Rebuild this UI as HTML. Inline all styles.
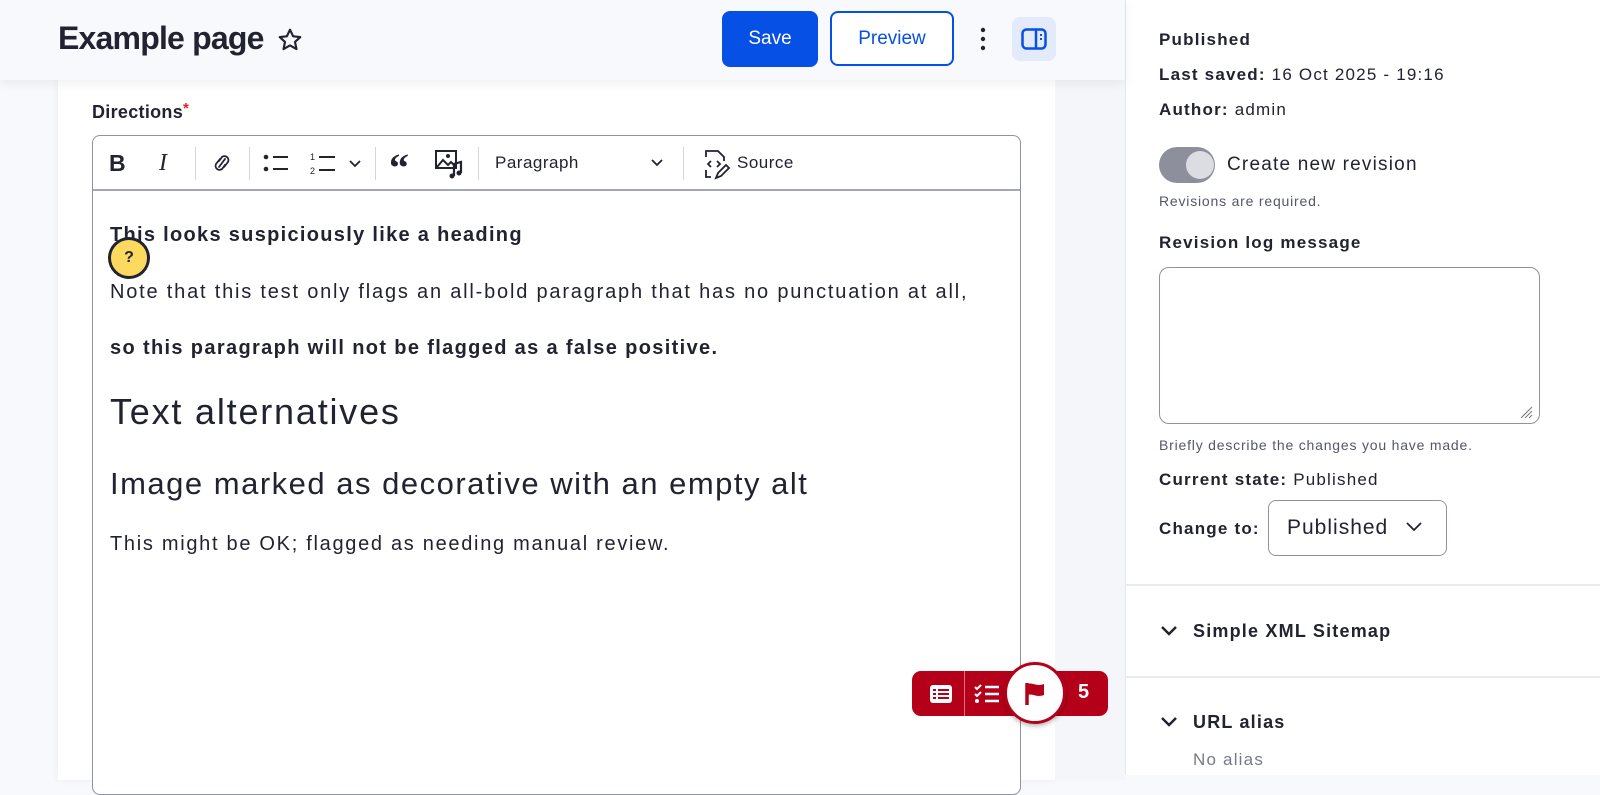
<!DOCTYPE html>
<html><head><meta charset="utf-8"><style>
*{box-sizing:border-box;margin:0;padding:0}
body{width:1600px;height:775px;overflow:hidden;background:#f8f9fc;font-family:"Liberation Sans",sans-serif;color:#222330;position:relative}
.a{position:absolute;white-space:nowrap}
.sep{position:absolute;top:147px;width:1px;height:33px;background:#d4d6de}
.sb{letter-spacing:1.2px}
</style></head><body>
<div class="a" style="left:0;top:0;width:1125px;height:80px;background:#f8f9fc;box-shadow:0 4px 10px rgba(0,0,0,0.06);z-index:2"></div>
<div class="a" style="left:58px;top:80px;width:997px;height:700px;background:#fff;box-shadow:0 0 8px rgba(0,0,0,0.05)"></div>
<div class="a" style="left:1055px;top:80px;width:70px;height:700px;background:#f4f6fa"></div>
<div class="a" style="left:58px;top:20px;font-size:32px;font-weight:bold;letter-spacing:-0.8px;z-index:3">Example page</div>
<svg class="a" style="left:277px;top:27px;z-index:3" width="26" height="26" viewBox="0 0 24 24"><path d="M12 2.5l2.9 6.1 6.6.7-4.9 4.5 1.4 6.6L12 17l-6 3.4 1.4-6.6L2.5 9.3l6.6-.7z" fill="none" stroke="#222330" stroke-width="2" stroke-linejoin="round"/></svg>
<div class="a" style="left:722px;top:11px;width:96px;height:56px;background:#0750e6;border-radius:8px;color:#fff;font-size:19px;line-height:56px;text-align:center;z-index:3">Save</div>
<div class="a" style="left:830px;top:11px;width:124px;height:55px;border:2px solid #0750e6;border-radius:8px;background:#fff;color:#0750e6;font-size:19px;line-height:51px;text-align:center;z-index:3">Preview</div>
<svg class="a" style="left:978px;top:26px;z-index:3" width="10" height="26"><circle cx="5" cy="4" r="2.2" fill="#222330"/><circle cx="5" cy="13" r="2.2" fill="#222330"/><circle cx="5" cy="22" r="2.2" fill="#222330"/></svg>
<div class="a" style="left:1012px;top:17px;width:44px;height:44px;background:#e3eaf9;border-radius:8px;z-index:3"><svg style="position:absolute;left:9px;top:11px" width="26" height="22" viewBox="0 0 26 22"><rect x="1.5" y="1.5" width="23" height="19" rx="4" fill="none" stroke="#0750e6" stroke-width="2.5"/><line x1="15" y1="2" x2="15" y2="20" stroke="#0750e6" stroke-width="2.5"/><line x1="19" y1="7" x2="21" y2="7" stroke="#0750e6" stroke-width="2"/><line x1="19" y1="11" x2="21" y2="11" stroke="#0750e6" stroke-width="2"/></svg></div>

<div class="a" style="left:92px;top:100px;font-size:18px;font-weight:bold;letter-spacing:0.3px">Directions<span style="color:#d72222;font-size:15px;vertical-align:5px">*</span></div>
<div class="a" style="left:92px;top:135px;width:929px;height:660px;border:1.5px solid #8e92a4;border-radius:8px;background:#fff"></div>
<div class="a" style="left:93px;top:189px;width:927px;height:2px;background:#a4a7b6"></div>
<div class="a" style="left:109px;top:150px;font-size:23px;font-weight:bold">B</div>
<div class="a" style="left:159px;top:150px;font-size:24px;font-family:'Liberation Serif',serif;font-style:italic">I</div>
<div class="sep" style="left:195px"></div>
<svg class="a" style="left:210px;top:150px" width="24" height="26" viewBox="0 0 24 26"><path d="M10 9l-4 5a4 4 0 006 5l3-4M14 17l4-5a4 4 0 00-6-5l-3 4M9 17l6-8" fill="none" stroke="#222330" stroke-width="1.8" stroke-linecap="round"/></svg>
<div class="sep" style="left:249px"></div>
<svg class="a" style="left:262px;top:152px" width="28" height="22"><circle cx="4" cy="5" r="2.3" fill="#222330"/><circle cx="4" cy="17" r="2.3" fill="#222330"/><line x1="11" y1="5" x2="26" y2="5" stroke="#222330" stroke-width="2"/><line x1="11" y1="17" x2="26" y2="17" stroke="#222330" stroke-width="2"/></svg>
<svg class="a" style="left:309px;top:150px" width="60" height="26"><text x="1" y="10" font-size="9" font-family="Liberation Sans" fill="#222330">1</text><text x="1" y="24" font-size="9" font-family="Liberation Sans" fill="#222330">2</text><line x1="10" y1="7" x2="26" y2="7" stroke="#222330" stroke-width="2"/><line x1="10" y1="20" x2="26" y2="20" stroke="#222330" stroke-width="2"/><path d="M41 11l5 5 5-5" fill="none" stroke="#222330" stroke-width="1.8"/></svg>
<div class="sep" style="left:375px"></div>
<div class="a" style="left:389px;top:144px;font-size:40px;font-weight:bold;font-family:'Liberation Serif',serif">&#8220;</div>
<svg class="a" style="left:434px;top:149px" width="30" height="30" viewBox="0 0 30 30"><rect x="2" y="2" width="20" height="17" fill="none" stroke="#222330" stroke-width="2"/><path d="M3 18l6-7 5 5 3-3 4 4" fill="none" stroke="#222330" stroke-width="2"/><circle cx="14" cy="7" r="2" fill="#222330"/><path d="M20 27V15l7-2v11" fill="none" stroke="#222330" stroke-width="2.2"/><circle cx="18" cy="27" r="2.5" fill="#222330"/><circle cx="25" cy="24" r="2.5" fill="#222330"/></svg>
<div class="sep" style="left:478px"></div>
<div class="a" style="left:495px;top:153px;font-size:17px;letter-spacing:0.5px">Paragraph</div>
<svg class="a" style="left:650px;top:158px" width="14" height="10"><path d="M2 2l5 5 5-5" fill="none" stroke="#222330" stroke-width="1.8"/></svg>
<div class="sep" style="left:683px"></div>
<svg class="a" style="left:702px;top:148px" width="30" height="32" viewBox="0 0 30 32"><path d="M4 9V3h12l6 6v4M4 22v7h5" fill="none" stroke="#222330" stroke-width="1.8"/><path d="M9 13l-3 3 3 3M15 13l3 3-3 3" fill="none" stroke="#222330" stroke-width="1.8"/><path d="M14 30l2-5 8-8 3 3-8 8z" fill="none" stroke="#222330" stroke-width="1.8"/></svg>
<div class="a" style="left:737px;top:153px;font-size:17px;letter-spacing:0.5px">Source</div>

<div class="a" style="left:110px;top:224px;font-size:20px;font-weight:bold;letter-spacing:1.3px">This looks suspiciously like a heading</div>
<div class="a" style="left:108px;top:237px;width:42px;height:42px;border-radius:50%;background:#222330;padding:2px"><div style="width:38px;height:38px;border-radius:50%;background:#fcd95f;border:1.5px solid #222330;font-weight:bold;font-size:16px;text-align:center;line-height:35px">?</div></div>
<div class="a" style="left:110px;top:281px;font-size:20px;letter-spacing:1.8px">Note that this test only flags an all-bold paragraph that has no punctuation at all,</div>
<div class="a" style="left:110px;top:337px;font-size:20px;font-weight:bold;letter-spacing:1.35px">so this paragraph will not be flagged as a false positive.</div>
<div class="a" style="left:110px;top:391px;font-size:36px;letter-spacing:1.8px">Text alternatives</div>
<div class="a" style="left:110px;top:466px;font-size:31px;letter-spacing:1.5px">Image marked as decorative with an empty alt</div>
<div class="a" style="left:110px;top:533px;font-size:20px;letter-spacing:1.7px">This might be OK; flagged as needing manual review.</div>

<div class="a" style="left:912px;top:671px;width:196px;height:45px;background:#b5001a;border-radius:9px"></div>
<div class="a" style="left:964px;top:671px;width:1px;height:45px;background:#e07080"></div>
<svg class="a" style="left:928px;top:683px" width="26" height="22"><rect x="2" y="2" width="22" height="18" rx="3" fill="#fff"/><g fill="#b5001a"><rect x="5" y="6" width="3" height="2"/><rect x="10" y="6" width="11" height="2"/><rect x="5" y="10" width="3" height="2"/><rect x="10" y="10" width="11" height="2"/><rect x="5" y="14" width="3" height="2"/><rect x="10" y="14" width="11" height="2"/></g></svg>
<svg class="a" style="left:973px;top:682px" width="28" height="24"><path d="M2 5l2 2 4-4M2 12l2 2 4-4" fill="none" stroke="#fff" stroke-width="2"/><circle cx="4" cy="19" r="2" fill="#fff"/><g stroke="#fff" stroke-width="2.5"><line x1="12" y1="5" x2="26" y2="5"/><line x1="12" y1="12" x2="26" y2="12"/><line x1="12" y1="19" x2="26" y2="19"/></g></svg>
<div class="a" style="left:1004px;top:662px;width:62px;height:62px;border-radius:50%;background:#fff;border:3px solid #b5001a;box-shadow:0 2px 5px rgba(0,0,0,.3)"><svg style="position:absolute;left:17px;top:16px" width="24" height="26"><path d="M3 2v22" stroke="#b5001a" stroke-width="3.5"/><path d="M4 3c5-2 8 3 16 0v11c-8 3-11-2-16 0z" fill="#b5001a"/></svg></div>
<div class="a" style="left:1078px;top:681px;font-size:20px;font-weight:bold;color:#fff">5</div>

<div class="a" style="left:1125px;top:0;width:475px;height:775px;background:#fff;border-left:1px solid #e6e7ee"></div>
<div class="a sb" style="left:1159px;top:30px;font-size:17px;font-weight:bold">Published</div>
<div class="a sb" style="left:1159px;top:65px;font-size:17px"><b>Last saved:</b> 16 Oct 2025 - 19:16</div>
<div class="a sb" style="left:1159px;top:100px;font-size:17px"><b>Author:</b> admin</div>
<div class="a" style="left:1159px;top:147px;width:56px;height:36px;border-radius:18px;background:#8d909c"><div style="position:absolute;left:27px;top:4px;width:28px;height:28px;border-radius:50%;background:#dcdde2"></div></div>
<div class="a sb" style="left:1227px;top:154px;font-size:19px">Create new revision</div>
<div class="a" style="left:1159px;top:193px;font-size:14px;color:#55576a;letter-spacing:0.8px">Revisions are required.</div>
<div class="a sb" style="left:1159px;top:233px;font-size:17px;font-weight:bold">Revision log message</div>
<div class="a" style="left:1159px;top:267px;width:381px;height:157px;border:1.5px solid #8e92a4;border-radius:10px"></div>
<svg class="a" style="left:1518px;top:404px" width="16" height="16"><path d="M14 3L3 14M14 7L7 14M14 11l-3 3" stroke="#777" stroke-width="1"/></svg>
<div class="a" style="left:1159px;top:437px;font-size:14px;color:#55576a;letter-spacing:0.8px">Briefly describe the changes you have made.</div>
<div class="a sb" style="left:1159px;top:470px;font-size:17px"><b>Current state:</b> Published</div>
<div class="a sb" style="left:1159px;top:519px;font-size:17px;font-weight:bold">Change to:</div>
<div class="a" style="left:1268px;top:500px;width:179px;height:56px;border:1.5px solid #8e92a4;border-radius:8px;font-size:21px;line-height:53px;padding-left:18px;letter-spacing:1px">Published</div>
<svg class="a" style="left:1405px;top:521px" width="18" height="12"><path d="M2 2l7 7 7-7" fill="none" stroke="#222330" stroke-width="1.8"/></svg>
<div class="a" style="left:1126px;top:584px;width:474px;height:2px;background:#eaebf0"></div>
<svg class="a" style="left:1160px;top:625px" width="18" height="12"><path d="M2 2l7 7 7-7" fill="none" stroke="#222330" stroke-width="2.5"/></svg>
<div class="a sb" style="left:1193px;top:621px;font-size:18px;font-weight:bold">Simple XML Sitemap</div>
<div class="a" style="left:1126px;top:676px;width:474px;height:2px;background:#eaebf0"></div>
<svg class="a" style="left:1160px;top:716px" width="18" height="12"><path d="M2 2l7 7 7-7" fill="none" stroke="#222330" stroke-width="2.5"/></svg>
<div class="a sb" style="left:1193px;top:712px;font-size:18px;font-weight:bold">URL alias</div>
<div class="a sb" style="left:1193px;top:750px;font-size:17px;color:#777a88">No alias</div>
</body></html>
